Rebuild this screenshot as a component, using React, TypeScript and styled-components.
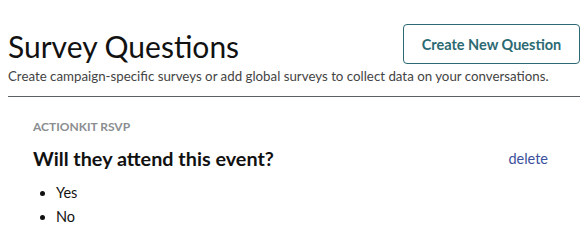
import React from "react";
import styled, { createGlobalStyle } from "styled-components";

const Global = createGlobalStyle`
  body {
    margin: 8px;
    font-family: Lato, "Noto Sans", sans-serif;
    color: #111;
    background: #fff;
  }
`;

const Page = styled.div`
  display: flex;
  flex-direction: column;
  width: 572px;
`;

const Header = styled.div`
  display: flex;
  justify-content: space-between;
  align-items: flex-start;
  padding-top: 16px;
  position: relative;
`;

const TitleBlock = styled.div`
  display: flex;
  flex-direction: column;
`;

const Title = styled.h1`
  margin: 0;
  font-size: 30px;
  font-weight: 400;
  line-height: 44px;
  color: #111;
`;

const Subtitle = styled.p`
  margin: 0;
  font-size: 13.3px;
  line-height: 16px;
  color: #444;
  white-space: nowrap;
`;

const CreateButton = styled.button`
  position: absolute;
  right: 0;
  top: 16px;
  height: 40px;
  width: 177px;
  border: 1px solid #2c6a73;
  border-radius: 4px;
  background: #fff;
  color: #2c6a73;
  font-family: inherit;
  font-weight: 700;
  font-size: 14.5px;
  cursor: pointer;
`;

const Divider = styled.hr`
  margin: 12px 0 0;
  border: none;
  border-top: 1px solid #5a5f66;
`;

const Section = styled.section`
  display: flex;
  flex-direction: column;
  padding: 22px 32px 0 25px;
`;

const Category = styled.div`
  font-size: 12px;
  font-weight: 700;
  color: #8a8d91;
  text-transform: uppercase;
  line-height: 16px;
`;

const QuestionRow = styled.div`
  display: flex;
  justify-content: space-between;
  align-items: center;
  margin-top: 10px;
`;

const Question = styled.h2`
  margin: 0;
  font-size: 19.8px;
  font-weight: 700;
  line-height: 26px;
`;

const DeleteLink = styled.a`
  font-size: 14.5px;
  color: #3b4f9c;
  text-decoration: none;
  cursor: pointer;
`;

const Answers = styled.ul`
  margin: 10px 0 0;
  padding-left: 23px;
`;

const Answer = styled.li`
  font-size: 14.5px;
  line-height: 24px;
`;

export default function App() {
  return (
    <>
      <Global />
      <Page>
        <Header>
          <TitleBlock>
            <Title>Survey Questions</Title>
            <Subtitle>
              Create campaign-specific surveys or add global surveys to collect data on your conversations.
            </Subtitle>
          </TitleBlock>
          <CreateButton>Create New Question</CreateButton>
        </Header>
        <Divider />
        <Section>
          <Category>ActionKit RSVP</Category>
          <QuestionRow>
            <Question>Will they attend this event?</Question>
            <DeleteLink>delete</DeleteLink>
          </QuestionRow>
          <Answers>
            <Answer>Yes</Answer>
            <Answer>No</Answer>
          </Answers>
        </Section>
      </Page>
    </>
  );
}
